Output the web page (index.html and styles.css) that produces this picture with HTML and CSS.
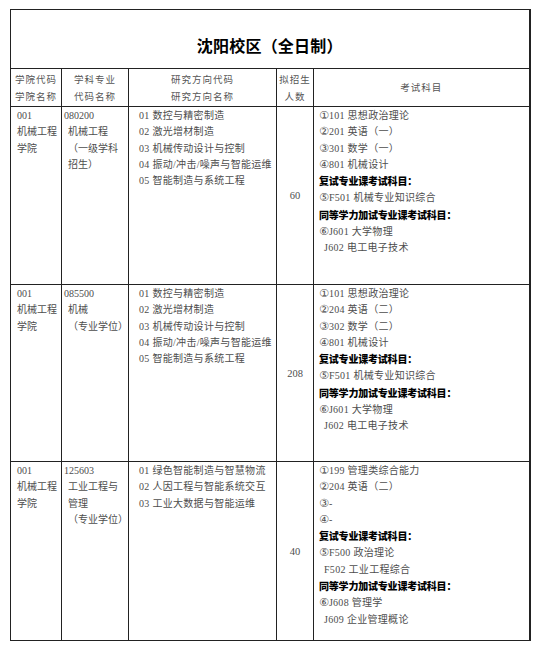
FILE: index.html
```html
<!DOCTYPE html>
<html lang="zh-CN">
<head>
<meta charset="utf-8">
<title>沈阳校区（全日制）</title>
<link rel="stylesheet" href="styles.css">
</head>
<body>
<table class="plan">
  <colgroup>
    <col class="c1"><col class="c2"><col class="c3"><col class="c4"><col class="c5">
  </colgroup>
  <tr class="title-row">
    <td colspan="5" class="title">沈阳校区（全日制）</td>
  </tr>
  <tr class="head-row">
    <td class="head">学院代码<br>学院名称</td>
    <td class="head">学科专业<br>代码名称</td>
    <td class="head">研究方向代码<br>研究方向名称</td>
    <td class="head">拟招生<br>人数</td>
    <td class="head">考试科目</td>
  </tr>
  <tr class="row r1">
    <td class="cell">001<br>机械工程<br>学院</td>
    <td class="cell major">080200<br><span class="cj">机械工程</span><br><span class="cj">（一级学科</span><br><span class="cj">招生）</span></td>
    <td class="cell dir">01 数控与精密制造<br>02 激光增材制造<br>03 机械传动设计与控制<br>04 振动/冲击/噪声与智能运维<br>05 智能制造与系统工程</td>
    <td class="num">60</td>
    <td class="cell exam"><span class="circ">①</span>101 思想政治理论<br><span class="circ">②</span>201 英语（一）<br><span class="circ">③</span>301 数学（一）<br><span class="circ">④</span>801 机械设计<br><b>复试专业课考试科目：</b><br><span class="circ">⑤</span>F501 机械专业知识综合<br><b>同等学力加试专业课考试科目：</b><br><span class="circ">⑥</span>J601 大学物理<br><span class="ind">J602 电工电子技术</span></td>
  </tr>
  <tr class="row r2">
    <td class="cell">001<br>机械工程<br>学院</td>
    <td class="cell major">085500<br><span class="cj">机械</span><br><span class="cj">（专业学位）</span></td>
    <td class="cell dir">01 数控与精密制造<br>02 激光增材制造<br>03 机械传动设计与控制<br>04 振动/冲击/噪声与智能运维<br>05 智能制造与系统工程</td>
    <td class="num">208</td>
    <td class="cell exam"><span class="circ">①</span>101 思想政治理论<br><span class="circ">②</span>204 英语（二）<br><span class="circ">③</span>302 数学（二）<br><span class="circ">④</span>801 机械设计<br><b>复试专业课考试科目：</b><br><span class="circ">⑤</span>F501 机械专业知识综合<br><b>同等学力加试专业课考试科目：</b><br><span class="circ">⑥</span>J601 大学物理<br><span class="ind">J602 电工电子技术</span></td>
  </tr>
  <tr class="row r3">
    <td class="cell">001<br>机械工程<br>学院</td>
    <td class="cell major">125603<br><span class="cj">工业工程与</span><br><span class="cj">管理</span><br><span class="cj">（专业学位）</span></td>
    <td class="cell dir">01 绿色智能制造与智慧物流<br>02 人因工程与智能系统交互<br>03 工业大数据与智能运维</td>
    <td class="num">40</td>
    <td class="cell exam"><span class="circ">①</span>199 管理类综合能力<br><span class="circ">②</span>204 英语（二）<br><span class="circ">③</span>-<br><span class="circ">④</span>-<br><b>复试专业课考试科目：</b><br><span class="circ">⑤</span>F500 政治理论<br><span class="ind">F502 工业工程综合</span><br><b>同等学力加试专业课考试科目：</b><br><span class="circ">⑥</span>J608 管理学<br><span class="ind">J609 企业管理概论</span></td>
  </tr>
</table>
</body>
</html>
```

FILE: styles.css
```css
html, body {
  margin: 0;
  padding: 0;
  background: #ffffff;
}

body {
  font-family: "Liberation Serif", "Noto Sans CJK SC", serif;
  color: #4d4d4d;
}

.plan {
  margin: 9px 0 0 10px;
  width: 519px;
  border-collapse: collapse;
  table-layout: fixed;
  border-right: 2px solid #222;
}

.plan td {
  border: 1px solid #222;
  padding: 0;
  box-sizing: border-box;
}

.c1 { width: 51px; }
.c2 { width: 67px; }
.c3 { width: 148px; }
.c4 { width: 37px; }
.c5 { width: 216px; }

.title-row td { height: 59px; }
.head-row td { height: 38px; }
.r1 td { height: 178px; }
.r2 td { height: 177px; }
.r3 td { height: 179px; }

.title {
  text-align: center;
  vertical-align: middle;
  padding-top: 12px !important;
  font-family: "Noto Sans CJK SC", sans-serif;
  font-weight: 700;
  font-size: 16px;
  color: #000;
  letter-spacing: 0.2px;
}

.head {
  text-align: center;
  vertical-align: middle;
  font-family: "Noto Sans CJK SC", sans-serif;
  font-size: 9.5px;
  line-height: 17px;
  letter-spacing: 1px;
  color: #555;
}

.cell {
  vertical-align: top;
  font-size: 10px;
  line-height: 16.3px;
  padding: 1px 0 0 6px !important;
  color: #4d4d4d;
}

.cell.major {
  padding-left: 2px !important;
}

.cj {
  padding-left: 4px;
}

.cell.dir {
  padding-left: 10px !important;
  letter-spacing: 0.3px;
}

.cell.exam {
  padding-left: 5px !important;
  letter-spacing: 0.3px;
}

.circ {
  font-family: "DejaVu Sans", "Noto Sans CJK SC", sans-serif;
  font-size: 11px;
  line-height: 1;
  letter-spacing: 0;
}

.cell b {
  font-family: "Noto Sans CJK SC", sans-serif;
  font-weight: 900;
  color: #000;
  letter-spacing: -0.2px;
}

.ind {
  padding-left: 5px;
}

.num {
  text-align: center;
  vertical-align: middle;
  font-size: 10.5px;
  color: #4d4d4d;
}
```
